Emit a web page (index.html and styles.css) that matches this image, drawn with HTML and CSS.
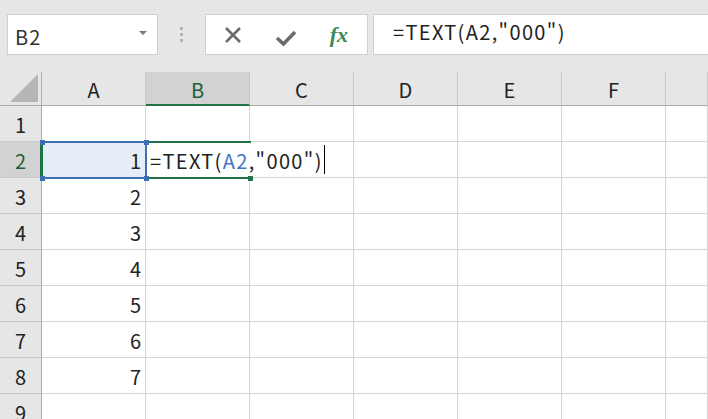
FILE: index.html
```html
<!DOCTYPE html>
<html lang="ja">
<head>
<meta charset="utf-8">
<link rel="stylesheet" href="styles.css">
</head>
<body>
<div class="toolbar">
  <div class="namebox">
    <span class="name">B2</span>
    <span class="drop"></span>
  </div>
  <div class="sep"><span></span><span></span><span></span></div>
  <div class="buttons">
    <svg class="ico" width="20" height="20" viewBox="0 0 20 20"><path d="M3 3 L17 17 M17 3 L3 17" stroke="#6b6b6b" stroke-width="2.6" fill="none"/></svg>
    <svg class="ico check" width="22" height="20" viewBox="0 0 22 20"><path d="M2 10 L8.5 16 L20 4" stroke="#6b6b6b" stroke-width="3.6" fill="none"/></svg>
    <span class="fx">fx</span>
  </div>
  <div class="formula">=TEXT(A2,"000")</div>
</div>
<div class="grid">
  <div class="corner"><span class="tri"></span></div>
  <div class="ch">A</div><div class="ch sel">B</div><div class="ch">C</div><div class="ch">D</div><div class="ch">E</div><div class="ch">F</div><div class="ch last"></div>

  <div class="rh">1</div><div class="c"></div><div class="c"></div><div class="c"></div><div class="c"></div><div class="c"></div><div class="c"></div><div class="c"></div>
  <div class="rh sel">2</div><div class="c num act">1</div><div class="c edit"><span class="etext">=TEXT(<span class="ref">A2</span>,"000")<span class="caret"></span></span></div><div class="c"></div><div class="c"></div><div class="c"></div><div class="c"></div><div class="c"></div>
  <div class="rh">3</div><div class="c num">2</div><div class="c"></div><div class="c"></div><div class="c"></div><div class="c"></div><div class="c"></div><div class="c"></div>
  <div class="rh">4</div><div class="c num">3</div><div class="c"></div><div class="c"></div><div class="c"></div><div class="c"></div><div class="c"></div><div class="c"></div>
  <div class="rh">5</div><div class="c num">4</div><div class="c"></div><div class="c"></div><div class="c"></div><div class="c"></div><div class="c"></div><div class="c"></div>
  <div class="rh">6</div><div class="c num">5</div><div class="c"></div><div class="c"></div><div class="c"></div><div class="c"></div><div class="c"></div><div class="c"></div>
  <div class="rh">7</div><div class="c num">6</div><div class="c"></div><div class="c"></div><div class="c"></div><div class="c"></div><div class="c"></div><div class="c"></div>
  <div class="rh">8</div><div class="c num">7</div><div class="c"></div><div class="c"></div><div class="c"></div><div class="c"></div><div class="c"></div><div class="c"></div>
  <div class="rh">9</div><div class="c"></div><div class="c"></div><div class="c"></div><div class="c"></div><div class="c"></div><div class="c"></div><div class="c"></div>

  <div class="selA"></div>
  <div class="rowmark"></div>
  <div class="h h1"></div><div class="h h2"></div><div class="h h3"></div><div class="h h4"></div>
  <div class="selB"></div>
  <div class="hg"></div>
</div>
</body>
</html>
```

FILE: styles.css
```css
html, body {
  margin: 0;
  padding: 0;
  background: #fff;
  overflow: hidden;
  font-family: "Noto Sans CJK JP", "Noto Sans", sans-serif;
}

.toolbar {
  height: 72px;
  box-sizing: border-box;
  background: #e6e6e6;
  padding: 14px 0 0 7px;
  display: flex;
  align-items: flex-start;
}

.namebox {
  width: 151px;
  height: 41px;
  box-sizing: border-box;
  background: #fff;
  border: 1px solid #cfcfcf;
  display: flex;
  align-items: center;
  justify-content: space-between;
  padding: 0 10px 0 7px;
}

.name {
  font-size: 20px;
  color: #333;
  line-height: 1;
  padding-top: 4px;
  letter-spacing: 1px;
}

.drop {
  width: 0;
  height: 0;
  border-left: 4px solid transparent;
  border-right: 4px solid transparent;
  border-top: 4px solid #7a7a7a;
  margin-top: -4px;
}

.sep {
  width: 47px;
  height: 41px;
  display: flex;
  flex-direction: column;
  align-items: center;
  justify-content: center;
  gap: 3px;
}

.sep span {
  width: 3px;
  height: 3px;
  background: #b3b3b3;
}

.buttons {
  width: 163px;
  height: 41px;
  box-sizing: border-box;
  background: #fff;
  border: 1px solid #cfcfcf;
  display: flex;
  align-items: center;
  justify-content: space-between;
  padding: 0 19px 0 17px;
}

.check {
  margin-top: 6px;
}

.fx {
  font-family: "Liberation Serif", "DejaVu Serif", serif;
  font-style: italic;
  font-weight: bold;
  font-size: 22px;
  color: #3a8a57;
  margin-top: 0;
}

.formula {
  flex: 1;
  margin-left: 5px;
  margin-right: -2px;
  height: 41px;
  box-sizing: border-box;
  background: #fff;
  border: 1px solid #cfcfcf;
  font-size: 20px;
  color: #222;
  padding: 2px 0 0 19px;
  white-space: nowrap;
  letter-spacing: 1.35px;
}

.grid {
  position: relative;
  display: grid;
  grid-template-columns: 42px repeat(6, 104px) 42px;
  grid-template-rows: 34px repeat(9, 36px);
  background: #fff;
}

.corner, .ch, .rh {
  background: #e6e6e6;
  box-sizing: border-box;
  display: flex;
  align-items: center;
  justify-content: center;
  font-size: 20px;
  color: #222;
}

.corner {
  position: relative;
  border-right: 1px solid #ababab;
  border-bottom: 1px solid #ababab;
}

.tri {
  position: absolute;
  right: 3px;
  bottom: 3px;
  width: 0;
  height: 0;
  border-left: 28px solid transparent;
  border-bottom: 28px solid #b5b5b5;
}

.ch {
  border-right: 1px solid #c9c9c9;
  border-bottom: 1px solid #ababab;
  padding-top: 2px;
}

.ch.sel {
  background: #d2d2d2;
  color: #1f5d37;
  border-bottom: 2px solid #217346;
}

.rh {
  border-right: 1px solid #ababab;
  border-bottom: 1px solid #c9c9c9;
  padding-top: 2px;
}

.rh.sel {
  background: #d2d2d2;
  color: #1f5d37;
}

.c {
  box-sizing: border-box;
  border-right: 1px solid #d4d4d4;
  border-bottom: 1px solid #d4d4d4;
  font-size: 20px;
  color: #222;
  display: flex;
  align-items: center;
  padding-top: 2px;
}

.num {
  justify-content: flex-end;
  padding-right: 4px;
}

.act {
  background: #e8eef8;
}

.edit {
  position: relative;
  z-index: 2;
  white-space: nowrap;
  overflow: visible;
  padding-left: 4px;
  border-right: none;
}

.etext {
  flex-shrink: 0;
  letter-spacing: 1.35px;
  display: flex;
  align-items: center;
}

.ref {
  color: #4472c4;
}

.caret {
  display: inline-block;
  flex-shrink: 0;
  width: 1px;
  height: 29px;
  background: #000;
  margin-left: 1px;
  margin-top: -2px;
}

.selA {
  position: absolute;
  left: 41px;
  top: 69px;
  width: 106px;
  height: 38px;
  box-sizing: border-box;
  border: 2px solid #3d6db5;
  border-left-color: #217346;
  z-index: 3;
  pointer-events: none;
}

.rowmark {
  position: absolute;
  left: 40px;
  top: 70px;
  width: 3px;
  height: 36px;
  background: #217346;
  z-index: 4;
}

.h {
  position: absolute;
  width: 5px;
  height: 5px;
  background: #3d6db5;
  z-index: 5;
}

.h1 { left: 40px; top: 68px; }
.h2 { left: 144px; top: 68px; }
.h3 { left: 40px; top: 104px; }
.h4 { left: 144px; top: 104px; }

.selB {
  position: absolute;
  left: 147px;
  top: 69px;
  width: 104px;
  height: 38px;
  box-sizing: border-box;
  border-top: 2px solid #217346;
  border-bottom: 2px solid #217346;
  z-index: 3;
}

.hg {
  position: absolute;
  left: 248px;
  top: 104px;
  width: 5px;
  height: 5px;
  background: #217346;
  z-index: 5;
}
```
